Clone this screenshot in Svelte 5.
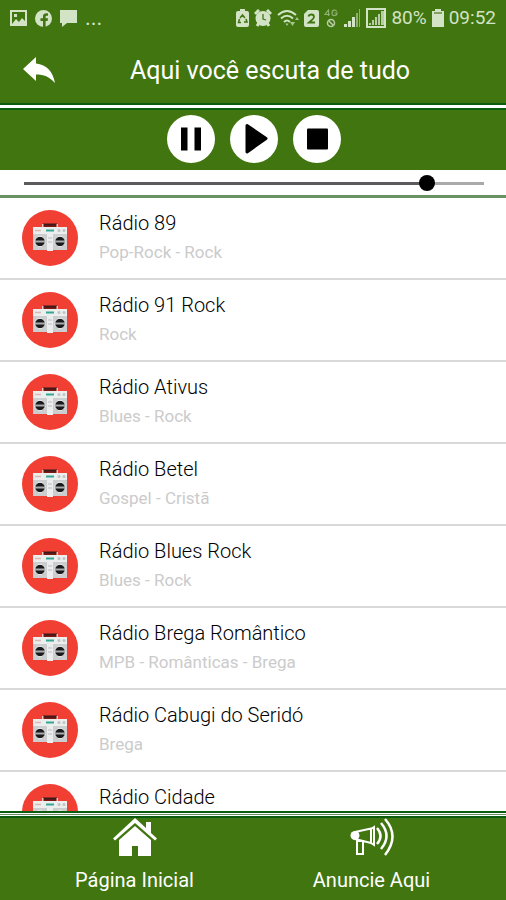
<script>
  let volume = $state(89);
  const stations = [
    ['Rádio 89', 'Pop-Rock - Rock'],
    ['Rádio 91 Rock', 'Rock'],
    ['Rádio Ativus', 'Blues - Rock'],
    ['Rádio Betel', 'Gospel - Cristã'],
    ['Rádio Blues Rock', 'Blues - Rock'],
    ['Rádio Brega Romântico', 'MPB - Românticas - Brega'],
    ['Rádio Cabugi do Seridó', 'Brega'],
    ['Rádio Cidade', '']
  ];
</script>

<div class="app">
  <div class="status">
    <div class="group left">
      <svg width="17" height="17" viewBox="0 0 17 17"><path fill="#d3e3c5" fill-rule="evenodd" d="M0 0h17v16H0zM2 2v12l4-5 3 3 3-4 3 3V2zM4 4h3v3H4z" /></svg>
      <svg width="17" height="17" viewBox="0 0 17 17"><circle cx="8.500" cy="8.500" r="8.500" fill="#d3e3c5" /><path d="M8 17v-6H5.500V8.200H8V6.500C8 4 9.500 3 13 3.400v2.300c-1.800-.1-2.400 0-2.400 1.200v1.300H13l-.4 2.800h-2V17z" fill="#417510" /></svg>
      <svg width="17" height="17" viewBox="0 0 17 17"><path fill="#d3e3c5" d="M0 0h17v13H7l-5 4v-4H0z" /></svg>
      <span class="dots">...</span>
    </div>
    <div class="group right">
      <svg width="13" height="18" viewBox="0 0 13 18"><path fill="#d3e3c5" d="M4 0h5v2h2q2 0 2 2v12q0 2-2 2H2q-2 0-2-2V4q0-2 2-2h2z" /><path d="M4 9l2.500-3L9 9M10 10l1 3H8M5 13.500H2.500L3.500 10" fill="none" stroke="#417510" stroke-width="1.500" /></svg>
      <svg width="18" height="18" viewBox="0 0 18 18"><circle cx="9" cy="9.500" r="7.500" fill="#d3e3c5" /><path d="M1 5l4-4M17 5l-4-4M3 17l2-3M15 17l-2-3" stroke="#d3e3c5" stroke-width="3" /><path d="M9 5v5l3 1" fill="none" stroke="#417510" stroke-width="1.300" /></svg>
      <svg width="22" height="18" viewBox="0 0 22 18"><g fill="none" stroke="#d3e3c5" stroke-width="2"><path d="M1 6q9-8 18 0M4 9.500q6-5.500 12 0M7 13q3-3 6 0" /></g><path d="M13 13h5l-2.500 4zM18 11l2-3 2 3zM8.500 14.500h3L10 17z" fill="#a9c493" /></svg>
      <svg width="15" height="17" viewBox="0 0 15 17"><path fill="#d3e3c5" d="M4 0h9q2 0 2 2v13q0 2-2 2H2q-2 0-2-2V4z" /><path d="M4.500 6.500Q5 4.500 7.500 4.500T10 7Q10 8.500 5 12.500h6" fill="none" stroke="#417510" stroke-width="1.800" /></svg>
      <svg class="net" width="15" height="19" viewBox="0 0 15 19"><g fill="none" stroke="#8eaf70" stroke-width="1.200"><path d="M4.500 7V1L1 5.500h5M13 2.500Q12 1 10 1.200 8 1.500 8 4t2 2.700q3 0 3-2.700h-2.500" /></g><g fill="none" stroke="#b8cda5" stroke-width="1.500"><circle cx="7" cy="14" r="3.500" /><path d="M4.500 11.500l5 5" /></g></svg>
      <svg width="17" height="18" viewBox="0 0 17 18"><path fill="#d3e3c5" d="M0 15h3v3H0zM4 12h3v6H4zM8 8h3v10H8z" /><path fill="#8eaf70" d="M12 4h2v14h-2zM15 0h1v18h-1z" /></svg>
      <svg width="20" height="20" viewBox="0 0 20 20"><path d="M1 1h18v18H1z" fill="none" stroke="#d3e3c5" stroke-width="2" /><path fill="#b8cda5" d="M3 17h2v-2H3zM6 17h2v-5H6zM9 17h2V9H9zM12 17h2V6h-2zM15 17h3V3h-3z" /></svg>
      <span class="num">80%</span>
      <svg width="12" height="18" viewBox="0 0 12 18"><path fill="#d3e3c5" d="M3 0h6v2h3v16H0V2h3z" /><path fill="#7fa25e" d="M2 3h8v2H2z" /></svg>
      <span class="num">09:52</span>
    </div>
  </div>

  <header>
    <button class="back" aria-label="Voltar">
      <svg width="34" height="28" viewBox="0 0 34 28"><path fill="#fff" d="M1 13L14 1v6.500C25 8.500 31 16 33 27 27 20.500 22 18.500 14 18.500V25z" /></svg>
    </button>
    <h1>Aqui você escuta de tudo</h1>
  </header>
  <div class="stripe"></div>

  <div class="player">
    <button aria-label="Pausar"><svg width="48" height="48" viewBox="0 0 48 48"><path d="M14 12.500h6.500v23H14zM27.500 12.500H34v23h-6.500z" /></svg></button>
    <button aria-label="Tocar"><svg width="48" height="48" viewBox="0 0 48 48"><path d="M17 10.500L36 23.500 17 37z" stroke="#000" stroke-width="3" stroke-linejoin="round" /></svg></button>
    <button aria-label="Parar"><svg width="48" height="48" viewBox="0 0 48 48"><rect x="14" y="13.500" width="21" height="21" rx="1" /></svg></button>
  </div>
  <div class="volume">
    <input type="range" min="0" max="100" aria-label="Volume" bind:value={volume} style="--v: {volume}%" />
  </div>

  <ul>
    {#each stations as [name, genre]}
      <li>
        <svg class="cover" width="56" height="56" viewBox="0 0 56 56">
          <circle cx="28" cy="28" r="28" fill="#f23f33" />
          <path d="M20.500 18v-3.500h15V18z" fill="#7d1712" />
          <path d="M21 14.500h14" stroke="#3c1a1a" stroke-width="2" />
          <path d="M20 18v-4h1.500v4zM34.500 18v-4H36v4z" fill="#f0c4c0" />
          <rect x="11" y="17" width="34" height="23" fill="#cbcdcf" />
          <rect x="11" y="17" width="34" height="7" fill="#eceded" />
          <path d="M13 20.500h6" stroke="#d9b9b2" stroke-width="1.500" />
          <path d="M24 20.500h8" stroke="#35a795" stroke-width="2" />
          <circle cx="37" cy="20.500" r="1.500" fill="#bfc3c5" /><circle cx="42" cy="20.500" r="1.500" fill="#bfc3c5" />
          <rect x="25" y="24" width="6" height="17" fill="#eceded" />
          <path d="M26 28h4M26 32h4" stroke="#b9bdc0" />
          <g stroke="#efefef"><circle cx="18" cy="31.500" r="5.200" fill="#1a1a1a" /><circle cx="38" cy="31.500" r="5.200" fill="#1a1a1a" /></g>
          <path d="M13 31.500h10M33 31.500h10" stroke="#a9acae" stroke-width="2" />
        </svg>
        <div class="info">
          <h2>{name}</h2>
          <p>{genre}</p>
        </div>
      </li>
    {/each}
  </ul>

  <div class="stripe double"></div>
  <nav>
    <a href="#inicio">
      <svg width="44" height="40" viewBox="0 0 44 40"><path fill="#fff" d="M22 0l11 10V4h5v11l6 5.500-2 2L22 5 2 22.500l-2-2z" /><path fill="#fff" d="M22 8l16 14v16H25V28h-6v10H6V22z" /></svg>
      <span>Página Inicial</span>
    </a>
    <a href="#anuncie">
      <svg width="44" height="40" viewBox="0 0 44 40"><g fill="none" stroke="#fff" stroke-width="2"><path d="M5 14L21 10.500V25L5 21M21 11l3-2v18l-3-2M7 23h6v13H7z" /><path d="M27 10q7 8 0 16M31 5q11 13 0 26M35 1q15 17 0 36" stroke-width="2.500" /></g><circle cx="5" cy="17.500" r="4.500" fill="#fff" /></svg>
      <span>Anuncie Aqui</span>
    </a>
  </nav>
</div>

<style>
  :global(body) { margin: 0; background: #fff; }
  .app { display: flex; flex-direction: column; height: 100vh; overflow: hidden; font-family: Roboto, "Liberation Sans", sans-serif; background: #fff; }
  .status { display: flex; justify-content: space-between; align-items: center; height: 36px; padding: 0 10px; background: #417510; color: #d3e3c5; flex: none; }
  .group { display: flex; align-items: center; }
  .left { gap: 8px; }
  .right { gap: 5px; }
  .dots { font-size: 22px; line-height: 20px; }
  .num { font-size: 19px; line-height: 24px; }
  header { display: flex; align-items: center; height: 67px; padding: 0 22px; background: #417510; flex: none; }
  .back { width: 34px; height: 28px; }
  button { display: block; padding: 0; border: 0; background: none; cursor: pointer; }
  button svg { display: block; }
  h1 { flex: 1; margin: 0; padding-top: 2px; text-align: center; font-size: 25px; line-height: 32px; font-weight: 400; color: #fff; }
  .stripe { height: 3px; flex: none; background: #fff; border-top: 2px solid #0c5c10; border-bottom: 2px solid #0c5c10; }
  .double { background: linear-gradient(#fff 1px, #6a9163 1px 2px, #fff 2px); }
  .player { display: flex; justify-content: center; gap: 15px; padding: 5px 0 7px 2px; flex: none; background: #417510; }
  .player button { width: 48px; height: 48px; border-radius: 50%; background: #fff; }
  .volume { display: flex; align-items: center; height: 23px; padding: 2px 22px 0 24px; border-bottom: 3px solid #6a9163; flex: none; }
  input { -webkit-appearance: none; appearance: none; width: 100%; height: 16px; margin: 0; background: none; }
  input::-webkit-slider-runnable-track { height: 3px; background: linear-gradient(to right, #5c5a5c var(--v), #aaa var(--v)); }
  input::-webkit-slider-thumb { -webkit-appearance: none; width: 16px; height: 16px; margin-top: -7px; border-radius: 50%; background: #000; }
  ul { flex: 1; min-height: 0; margin: 0; padding: 0; list-style: none; overflow-y: auto; scrollbar-width: none; }
  li { display: flex; align-items: center; gap: 21px; height: 80px; padding: 0 22px; border-bottom: 2px solid #d9d9d9; }
  .cover { flex: none; }
  h2 { margin: 0; font-size: 20px; line-height: 29px; font-weight: 300; color: #000; }
  p { margin: 0; min-height: 29px; font-size: 17px; line-height: 29px; color: #cbcbcb; }
  nav { display: flex; height: 82px; padding: 0 16px; background: #417510; flex: none; }
  nav a { flex: 1; display: flex; flex-direction: column; align-items: center; gap: 8px; color: #fff; text-decoration: none; font-size: 20px; line-height: 28px; }
</style>
